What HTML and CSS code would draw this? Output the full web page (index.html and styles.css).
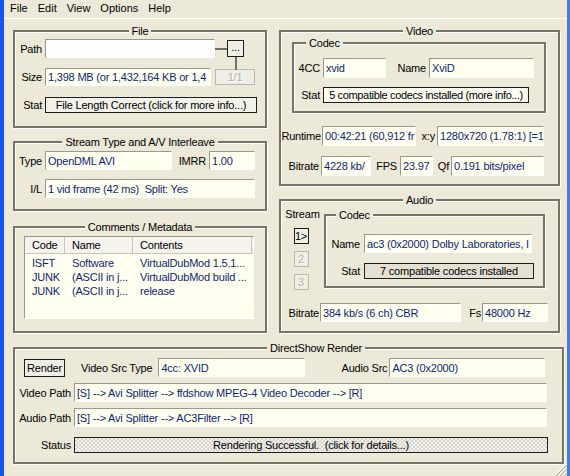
FILE: index.html
```html
<!DOCTYPE html>
<html lang="en">

<head>
    <meta charset="UTF-8">
    <title>GSpot</title>
    <link rel="stylesheet" href="styles.css">
</head>

<body>
    <div class="window">
        <div class="menubar">
            <span>File</span>
            <span>Edit</span>
            <span>View</span>
            <span>Options</span>
            <span>Help</span>
        </div>

        <div class="client">
            <div class="top">
                <!-- left column -->
                <div class="col-left">
                    <div class="group file-group">
                        <div class="group-title">File</div>
                        <div class="row path-row">
                            <span class="lbl lbl-file">Path</span>
                            <div class="field field-white w-path"></div>
                            <div class="connector"></div>
                            <div class="btn btn-browse">...</div>
                        </div>
                        <div class="row size-row">
                            <span class="lbl lbl-file">Size</span>
                            <div class="field w-size">1,398 MB (or 1,432,164 KB or 1,4</div>
                            <div class="btn btn-disabled btn-part">1/1</div>
                        </div>
                        <div class="row fstat-row">
                            <span class="lbl lbl-file">Stat</span>
                            <div class="btn btn-light w-fstat">File Length Correct (click for more info...)</div>
                        </div>
                    </div>

                    <div class="group stream-group">
                        <div class="group-title">Stream Type and A/V Interleave</div>
                        <div class="row type-row">
                            <span class="lbl lbl-file">Type</span>
                            <div class="field w-type">OpenDML AVI</div>
                            <span class="lbl lbl-imrr">IMRR</span>
                            <div class="field w-imrr">1.00</div>
                        </div>
                        <div class="row il-row">
                            <span class="lbl lbl-file">I/L</span>
                            <div class="field w-il">1 vid frame (42 ms)&nbsp; Split: Yes</div>
                        </div>
                    </div>

                    <div class="group comments-group">
                        <div class="group-title">Comments / Metadata</div>
                        <div class="listview">
                            <div class="lv-head">
                                <span class="c-code">Code</span>
                                <span class="c-name">Name</span>
                                <span class="c-contents">Contents</span>
                            </div>
                            <div class="lv-row">
                                <span class="c-code">ISFT</span>
                                <span class="c-name">Software</span>
                                <span class="c-contents">VirtualDubMod 1.5.1...</span>
                            </div>
                            <div class="lv-row">
                                <span class="c-code">JUNK</span>
                                <span class="c-name">(ASCII in j...</span>
                                <span class="c-contents">VirtualDubMod build ...</span>
                            </div>
                            <div class="lv-row">
                                <span class="c-code">JUNK</span>
                                <span class="c-name">(ASCII in j...</span>
                                <span class="c-contents">release</span>
                            </div>
                        </div>
                    </div>
                </div>

                <!-- right column -->
                <div class="col-right">
                    <div class="group video-group">
                        <div class="group-title">Video</div>
                        <div class="group sub-group vcodec">
                            <div class="group-title title-left">Codec</div>
                            <div class="row fourcc-row">
                                <span class="lbl lbl-vc">4CC</span>
                                <div class="field w-4cc">xvid</div>
                                <span class="lbl lbl-vname">Name</span>
                                <div class="field w-vname">XviD</div>
                            </div>
                            <div class="row vstat-row">
                                <span class="lbl lbl-vc">Stat</span>
                                <div class="btn btn-cream w-vstat">5 compatible codecs installed (more info...)</div>
                            </div>
                        </div>
                        <div class="row runtime-row">
                            <span class="lbl lbl-runtime">Runtime</span>
                            <div class="field w-runtime">00:42:21 (60,912 fr</div>
                            <span class="lbl lbl-xy">x:y</span>
                            <div class="field w-xy">1280x720 (1.78:1) [=1</div>
                        </div>
                        <div class="row vbitrate-row">
                            <span class="lbl lbl-vbitrate">Bitrate</span>
                            <div class="field w-vbitrate">4228 kb/</div>
                            <span class="lbl lbl-fps">FPS</span>
                            <div class="field w-fps">23.97</div>
                            <span class="lbl lbl-qf">Qf</span>
                            <div class="field w-qf">0.191 bits/pixel</div>
                        </div>
                    </div>

                    <div class="group audio-group">
                        <div class="group-title">Audio</div>
                        <div class="audio-top">
                            <div class="stream-col">
                                <span class="stream-lbl">Stream</span>
                                <div class="btn btn-stream">1&gt;</div>
                                <div class="btn btn-disabled btn-stream">2</div>
                                <div class="btn btn-disabled btn-stream">3</div>
                            </div>
                            <div class="group sub-group acodec">
                                <div class="group-title title-left">Codec</div>
                                <div class="row aname-row">
                                    <span class="lbl lbl-ac">Name</span>
                                    <div class="field w-aname">ac3 (0x2000) Dolby Laboratories, I</div>
                                </div>
                                <div class="row astat-row">
                                    <span class="lbl lbl-ac">Stat</span>
                                    <div class="btn btn-gray w-astat">7 compatible codecs installed</div>
                                </div>
                            </div>
                        </div>
                        <div class="row abitrate-row">
                            <span class="lbl lbl-abitrate">Bitrate</span>
                            <div class="field w-abitrate">384 kb/s (6 ch) CBR</div>
                            <span class="lbl lbl-fs">Fs</span>
                            <div class="field w-fs">48000 Hz</div>
                        </div>
                    </div>
                </div>
            </div>

            <div class="group ds-group">
                <div class="group-title title-ds">DirectShow Render</div>
                <div class="row src-row">
                    <div class="btn btn-render">Render</div>
                    <span class="lbl lbl-vsrc">Video Src Type</span>
                    <div class="field w-vsrc">4cc: XVID</div>
                    <span class="lbl lbl-asrc">Audio Src</span>
                    <div class="field w-asrc">AC3 (0x2000)</div>
                </div>
                <div class="row vpath-row">
                    <span class="lbl lbl-path">Video Path</span>
                    <div class="field w-dspath">[S] --&gt; Avi Splitter --&gt; ffdshow MPEG-4 Video Decoder --&gt; [R]</div>
                </div>
                <div class="row apath-row">
                    <span class="lbl lbl-path">Audio Path</span>
                    <div class="field w-dspath">[S] --&gt; Avi Splitter --&gt; AC3Filter --&gt; [R]</div>
                </div>
                <div class="row status-row">
                    <span class="lbl lbl-path">Status</span>
                    <div class="btn btn-status">Rendering Successful.&nbsp; (click for details...)</div>
                </div>
            </div>
        </div>

        <svg class="grip" width="13" height="13" viewBox="0 0 13 13">
            <path d="M12 1 L1 12 M12 5 L5 12 M12 9 L9 12" stroke="#ffffff" stroke-width="1" />
            <path d="M13 2 L2 13 M13 6 L6 13 M13 10 L10 13" stroke="#aca899" stroke-width="1" />
        </svg>
    </div>
</body>

</html>
```

FILE: styles.css
```css
* {
    box-sizing: border-box;
}

html,
body {
    margin: 0;
    padding: 0;
}

body {
    font-family: "Liberation Sans", Arial, sans-serif;
    font-size: 11px;
    letter-spacing: -0.2px;
    color: #000;
    background: #ece9d8;
}

.window {
    position: relative;
    width: 570px;
    height: 476px;
    overflow: hidden;
    background: #ece9d8;
    border-left: 4px solid #1c56e0;
    border-right: 3px solid #4a7ae8;
}

/* menu */
.menubar {
    display: flex;
    gap: 10px;
    height: 19px;
    padding-left: 6px;
    line-height: 17px;
    letter-spacing: 0;
    border-bottom: 1px solid #fff;
}

.client {
    padding: 11px 0 0 9px;
}

.top {
    display: flex;
    gap: 12px;
}

.col-left {
    width: 254px;
}

.col-right {
    width: 281px;
}

/* group boxes */
.group {
    border: 2px solid #75736a;
    box-shadow: inset 1px 1px 0 #fff, 1px 1px 0 #fff;
}

.group-title {
    display: table;
    margin: -7px auto 0;
    padding: 0 3px;
    line-height: 13px;
    background: #ece9d8;
}

.title-left {
    margin-left: 12px;
}

.title-ds {
    margin-left: 252px;
}

.file-group {
    height: 98px;
}

.stream-group {
    height: 70px;
    margin-top: 13px;
}

.comments-group {
    height: 107px;
    margin-top: 15px;
}

.video-group {
    height: 156px;
}

.audio-group {
    height: 134px;
    margin-top: 13px;
}

.ds-group {
    width: 551px;
    height: 117px;
    margin-top: 14px;
}

/* rows */
.row {
    display: flex;
    align-items: center;
}

.lbl {
    flex: none;
    text-align: right;
    white-space: nowrap;
}

.field {
    flex: none;
    display: flex;
    align-items: center;
    height: 100%;
    padding-left: 2px;
    overflow: hidden;
    white-space: nowrap;
    color: #0c1f75;
    background: #fffff0;
    border-top: 1px solid #9a998f;
    border-left: 1px solid #9a998f;
    border-right: 1px solid #fff;
    border-bottom: 1px solid #fff;
}

.field-white {
    background: #fff;
}

.btn {
    flex: none;
    display: flex;
    align-items: center;
    justify-content: center;
    height: 100%;
    white-space: nowrap;
    overflow: hidden;
    border: 1px solid #1e1e1e;
    background: #efeee6;
}

.btn-light {
    background: #f3f2ea;
}

.btn-cream {
    background: #fbfbf2;
}

.btn-gray {
    background: #e4e1d3;
}

.btn-disabled {
    color: #b3b0a2;
    text-shadow: 1px 1px 0 #fff;
    border-color: #bcb9aa;
}

/* file group */
.path-row {
    height: 19px;
    margin-top: 1px;
}

.size-row {
    height: 18px;
    margin-top: 10px;
}

.fstat-row {
    height: 16px;
    margin-top: 11px;
}

.lbl-file {
    width: 30px;
    padding-right: 3px;
}

.w-path {
    width: 170px;
}

.connector {
    width: 12px;
    height: 2px;
    background: #6f6e66;
}

.btn-browse {
    position: relative;
    width: 17px;
    height: 17px;
    overflow: visible;
    padding-bottom: 3px;
}

.btn-browse::after {
    content: "";
    position: absolute;
    left: 7px;
    top: 16px;
    width: 2px;
    height: 13px;
    background: #6f6e66;
}

.w-size {
    width: 166px;
}

.btn-part {
    width: 40px;
    height: 16px;
    margin-left: 4px;
}

.w-fstat {
    width: 212px;
}

/* stream group */
.type-row {
    height: 19px;
    margin-top: 2px;
}

.il-row {
    height: 19px;
    margin-top: 9px;
}

.w-type {
    width: 127px;
}

.lbl-imrr {
    width: 37px;
    padding-right: 3px;
}

.w-imrr {
    width: 46px;
}

.w-il {
    width: 210px;
}

/* list view */
.listview {
    width: 230px;
    height: 83px;
    margin: 2px 0 0 9px;
    background: #fffff0;
    border-top: 1px solid #9a998f;
    border-left: 1px solid #9a998f;
    border-right: 1px solid #fff;
    border-bottom: 1px solid #fff;
}

.lv-head {
    display: flex;
    height: 17px;
    line-height: 16px;
    background: #f4f3ec;
    border-bottom: 1px solid #c8c5b8;
}

.lv-head span {
    border-right: 1px solid #c8c5b8;
}

.lv-row {
    display: flex;
    line-height: 14px;
    color: #0c1f75;
}

.lv-head+.lv-row {
    margin-top: 2px;
}

.c-code,
.c-name,
.c-contents {
    flex: none;
    padding-left: 7px;
    white-space: nowrap;
    overflow: hidden;
}

.c-code {
    width: 40px;
}

.c-name {
    width: 68px;
}

.c-contents {
    width: 119px;
}

/* video group */
.sub-group {
    box-shadow: inset 1px 1px 0 #fff, 1px 1px 0 #fff;
}

.vcodec {
    width: 254px;
    height: 71px;
    margin: 4px 0 0 11px;
}

.fourcc-row {
    height: 20px;
    margin-top: 8px;
}

.vstat-row {
    height: 16px;
    margin-top: 9px;
}

.lbl-vc {
    width: 29px;
    padding-right: 3px;
}

.w-4cc {
    width: 63px;
}

.lbl-vname {
    width: 43px;
    padding-right: 3px;
}

.w-vname {
    width: 105px;
}

.w-vstat {
    width: 206px;
    letter-spacing: -0.35px;
}

.runtime-row {
    height: 20px;
    margin-top: 13px;
}

.vbitrate-row {
    height: 20px;
    margin-top: 10px;
}

.lbl-runtime {
    width: 41px;
    padding-right: 1px;
}

.w-runtime {
    width: 94px;
}

.lbl-xy {
    width: 21px;
    padding-right: 2px;
}

.w-xy {
    width: 107px;
}

.lbl-vbitrate {
    width: 40px;
    padding-right: 2px;
}

.w-vbitrate {
    width: 50px;
}

.lbl-fps {
    width: 29px;
    padding-right: 3px;
}

.w-fps {
    width: 33px;
}

.lbl-qf {
    width: 18px;
    padding-right: 2px;
}

.w-qf {
    width: 93px;
}

/* audio group */
.audio-top {
    display: flex;
}

.stream-col {
    display: flex;
    flex-direction: column;
    align-items: center;
    width: 43px;
}

.stream-lbl {
    margin-top: 1px;
    line-height: 13px;
}

.btn-stream {
    width: 15px;
    height: 16px;
    margin-top: 7px;
    margin-right: 3px;
}

.stream-lbl+.btn-stream {
    margin-top: 7px;
}

.acodec {
    width: 221px;
    height: 74px;
    margin-top: 7px;
}

.acodec .title-left {
    margin-left: 10px;
}

.aname-row {
    height: 19px;
    margin-top: 12px;
}

.astat-row {
    height: 16px;
    margin-top: 10px;
}

.lbl-ac {
    width: 38px;
    padding-right: 4px;
}

.w-aname {
    width: 168px;
}

.w-astat {
    width: 170px;
}

.abitrate-row {
    height: 19px;
    margin-top: 13px;
}

.lbl-abitrate {
    width: 39px;
    padding-right: 1px;
}

.w-abitrate {
    width: 141px;
}

.lbl-fs {
    width: 21px;
    padding-right: 1px;
}

.w-fs {
    width: 66px;
}

/* directshow group */
.src-row {
    height: 19px;
    margin-top: 3px;
}

.btn-render {
    width: 41px;
    height: 18px;
    margin-left: 9px;
}

.lbl-vsrc {
    margin-left: 16px;
    padding-right: 6px;
}

.w-vsrc {
    width: 147px;
}

.lbl-asrc {
    width: 84px;
    padding-right: 2px;
}

.w-asrc {
    width: 156px;
}

.vpath-row,
.apath-row {
    height: 19px;
    margin-top: 6px;
}

.status-row {
    height: 16px;
    margin-top: 10px;
}

.lbl-path {
    width: 59px;
    padding-right: 3px;
}

.w-dspath {
    width: 473px;
}

.btn-status {
    width: 474px;
    background: repeating-conic-gradient(#d8d6cc 0 25%, #f2f1ea 0 50%) 0 0 / 4px 4px;
}

.grip {
    position: absolute;
    right: 0;
    bottom: 0;
}
```
